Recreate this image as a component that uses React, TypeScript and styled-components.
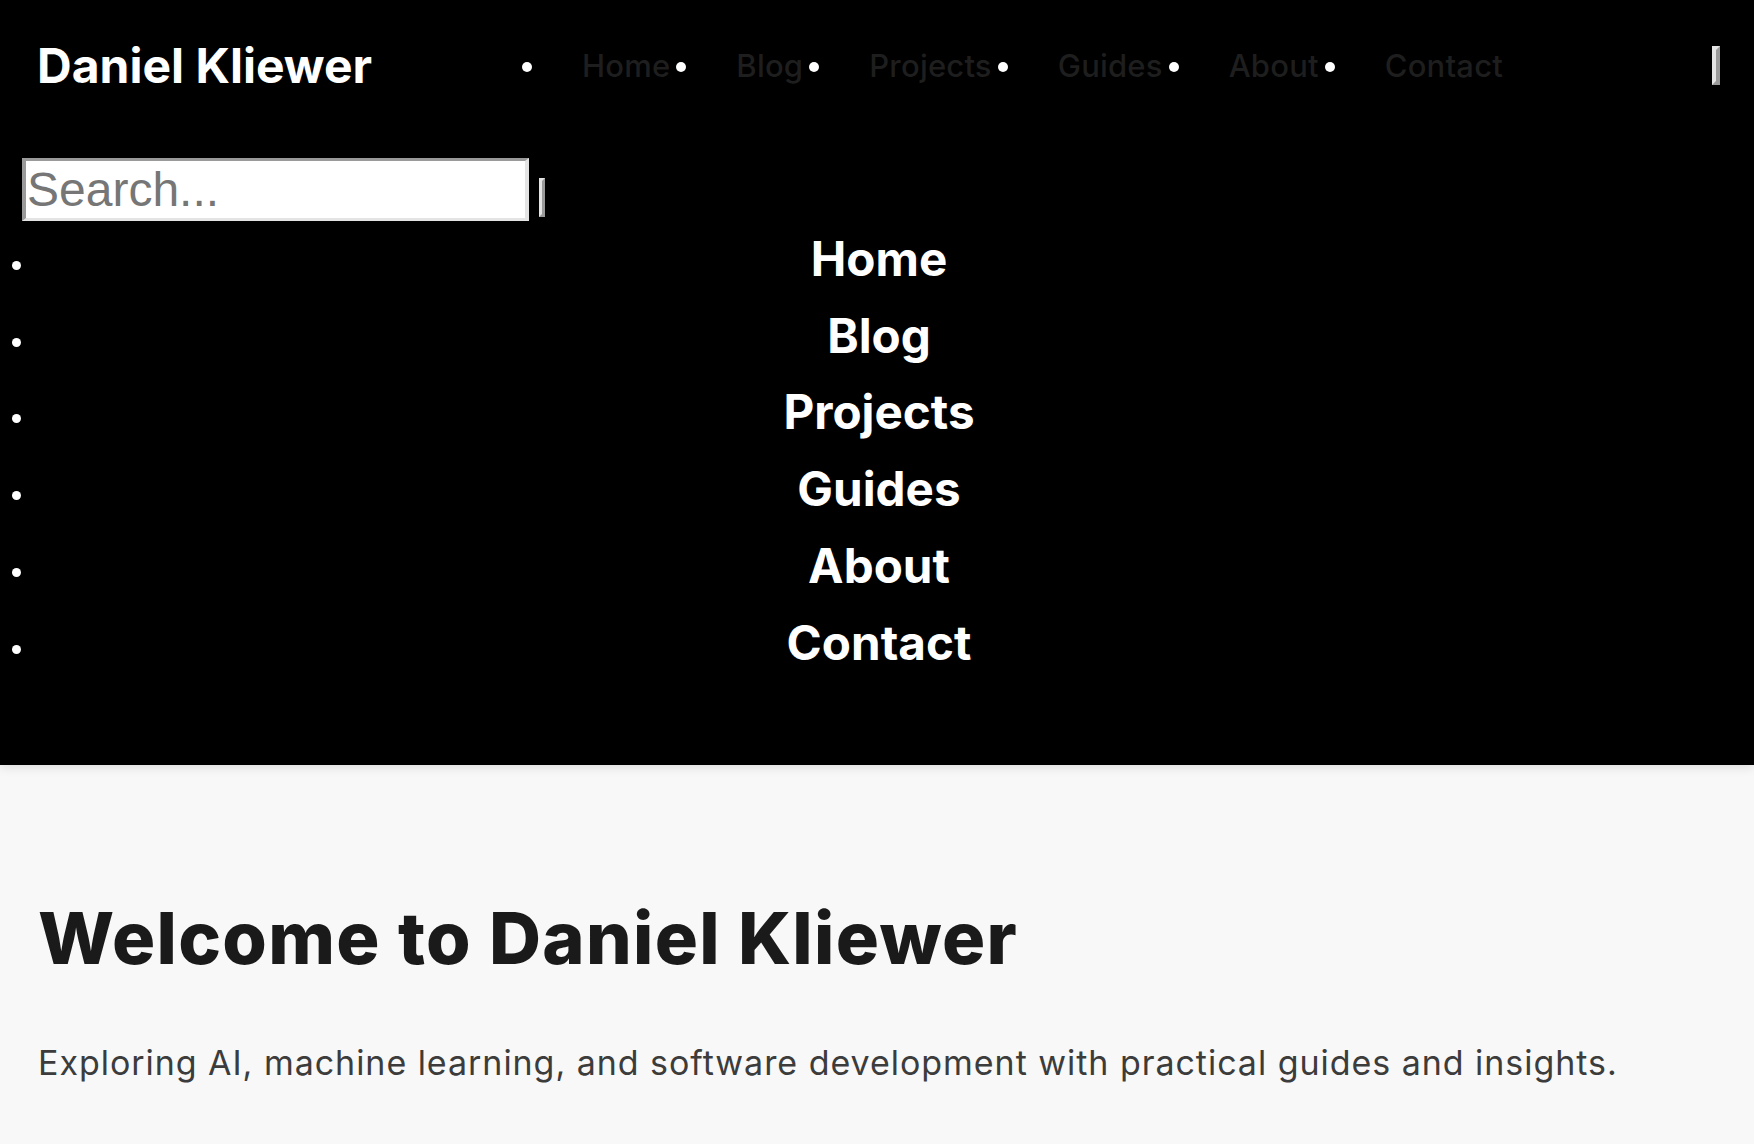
import React from "react";
import styled, { createGlobalStyle } from "styled-components";

const GlobalStyle = createGlobalStyle`
  html, body {
    margin: 0;
    padding: 0;
    background: #f8f8f8;
  }
  body {
    font-family: Inter, "Noto Sans", sans-serif;
  }
  * { box-sizing: border-box; }
`;

const Header = styled.header`
  background: #000;
  height: 765px;
  box-shadow: 0 2px 10px rgba(0, 0, 0, 0.12);
  position: relative;
  z-index: 1;
`;

const TopRow = styled.div`
  display: grid;
  grid-template-columns: 485px 1fr auto;
  align-items: center;
  height: 130px;
  padding: 0 34px 0 37px;
`;

const Logo = styled.a`
  font-family: Inter, sans-serif;
  font-weight: 700;
  font-size: 48px;
  color: #fff;
  text-decoration: none;
  letter-spacing: 0;
`;

const NavList = styled.ul`
  display: flex;
  align-items: center;
  gap: 6px;
  list-style: none;
  margin: 0;
  padding: 0;
`;

const NavItem = styled.li`
  display: flex;
  align-items: center;
`;

const Dot = styled.span<{ $size?: number }>`
  display: block;
  width: ${(p) => p.$size ?? 10}px;
  height: ${(p) => p.$size ?? 10}px;
  border-radius: 50%;
  background: #fff;
  flex: none;
`;

const NavDot = styled(Dot)`
  margin-right: 50px;
  margin-top: 3px;
`;

const NavLink = styled.a`
  font-family: Inter, sans-serif;
  font-weight: 500;
  font-size: 31px;
  letter-spacing: 0.2px;
  color: #1e1e1e;
  text-decoration: none;
`;

const BevelButton = styled.button<{ $w: number; $h: number }>`
  appearance: none;
  padding: 0;
  margin: 0;
  width: ${(p) => p.$w}px;
  height: ${(p) => p.$h}px;
  background: #efefef;
  border-style: solid;
  border-width: ${(p) => p.$w / 2}px;
  border-color: #e4e4e4 #9a9a9a #9a9a9a #e4e4e4;
`;

const SearchRow = styled.div`
  display: flex;
  align-items: flex-end;
  gap: 10px;
  margin-top: 28px;
  padding-left: 22px;
`;

const SearchInput = styled.input`
  width: 507px;
  height: 63px;
  padding: 0 1px;
  font-family: "Liberation Sans", Arial, sans-serif;
  font-size: 48px;
  color: #222;
  background: #fff;
  border-style: solid;
  border-width: 3px 4px;
  border-color: #9a9a9a #e4e4e4 #e4e4e4 #9a9a9a;
  outline: none;
  &::placeholder {
    color: #767676;
  }
`;

const SearchButton = styled(BevelButton)`
  margin-bottom: 4px;
`;

const MenuList = styled.ul`
  list-style: none;
  margin: -1px 0 0;
  padding: 0;
`;

const MenuRow = styled.li`
  display: grid;
  grid-template-columns: 32px 1fr 28px;
  align-items: center;
  height: 76.8px;
`;

const MenuDot = styled(Dot)`
  justify-self: center;
  margin-top: 14px;
`;

const MenuLink = styled.a`
  justify-self: center;
  font-family: Inter, sans-serif;
  font-weight: 700;
  font-size: 47.6px;
  color: #fff;
  text-decoration: none;
`;

const Main = styled.main`
  padding: 130px 38px 40px;
`;

const Title = styled.h1`
  margin: 0;
  font-family: Inter, sans-serif;
  font-weight: 800;
  font-size: 72px;
  line-height: 1.2;
  letter-spacing: 1.3px;
  color: #1a1a1a;
`;

const Lead = styled.p`
  margin: 58px 0 0;
  font-family: Inter, sans-serif;
  font-weight: 400;
  font-size: 34px;
  line-height: 1.4;
  letter-spacing: 0.96px;
  color: #3c3c3c;
`;

const links = ["Home", "Blog", "Projects", "Guides", "About", "Contact"];

export default function App() {
  return (
    <>
      <GlobalStyle />
      <Header>
        <TopRow>
          <Logo href="#">Daniel Kliewer</Logo>
          <nav>
            <NavList>
              {links.map((l) => (
                <NavItem key={l}>
                  <NavDot />
                  <NavLink href="#">{l}</NavLink>
                </NavItem>
              ))}
            </NavList>
          </nav>
          <BevelButton $w={8} $h={39} aria-label="Menu" />
        </TopRow>
        <SearchRow>
          <SearchInput placeholder="Search..." />
          <SearchButton $w={6} $h={39} aria-label="Search" />
        </SearchRow>
        <MenuList>
          {links.map((l) => (
            <MenuRow key={l}>
              <MenuDot $size={9} />
              <MenuLink href="#">{l}</MenuLink>
              <span />
            </MenuRow>
          ))}
        </MenuList>
      </Header>
      <Main>
        <Title>Welcome to Daniel Kliewer</Title>
        <Lead>
          Exploring AI, machine learning, and software development with practical guides and insights.
        </Lead>
      </Main>
    </>
  );
}
